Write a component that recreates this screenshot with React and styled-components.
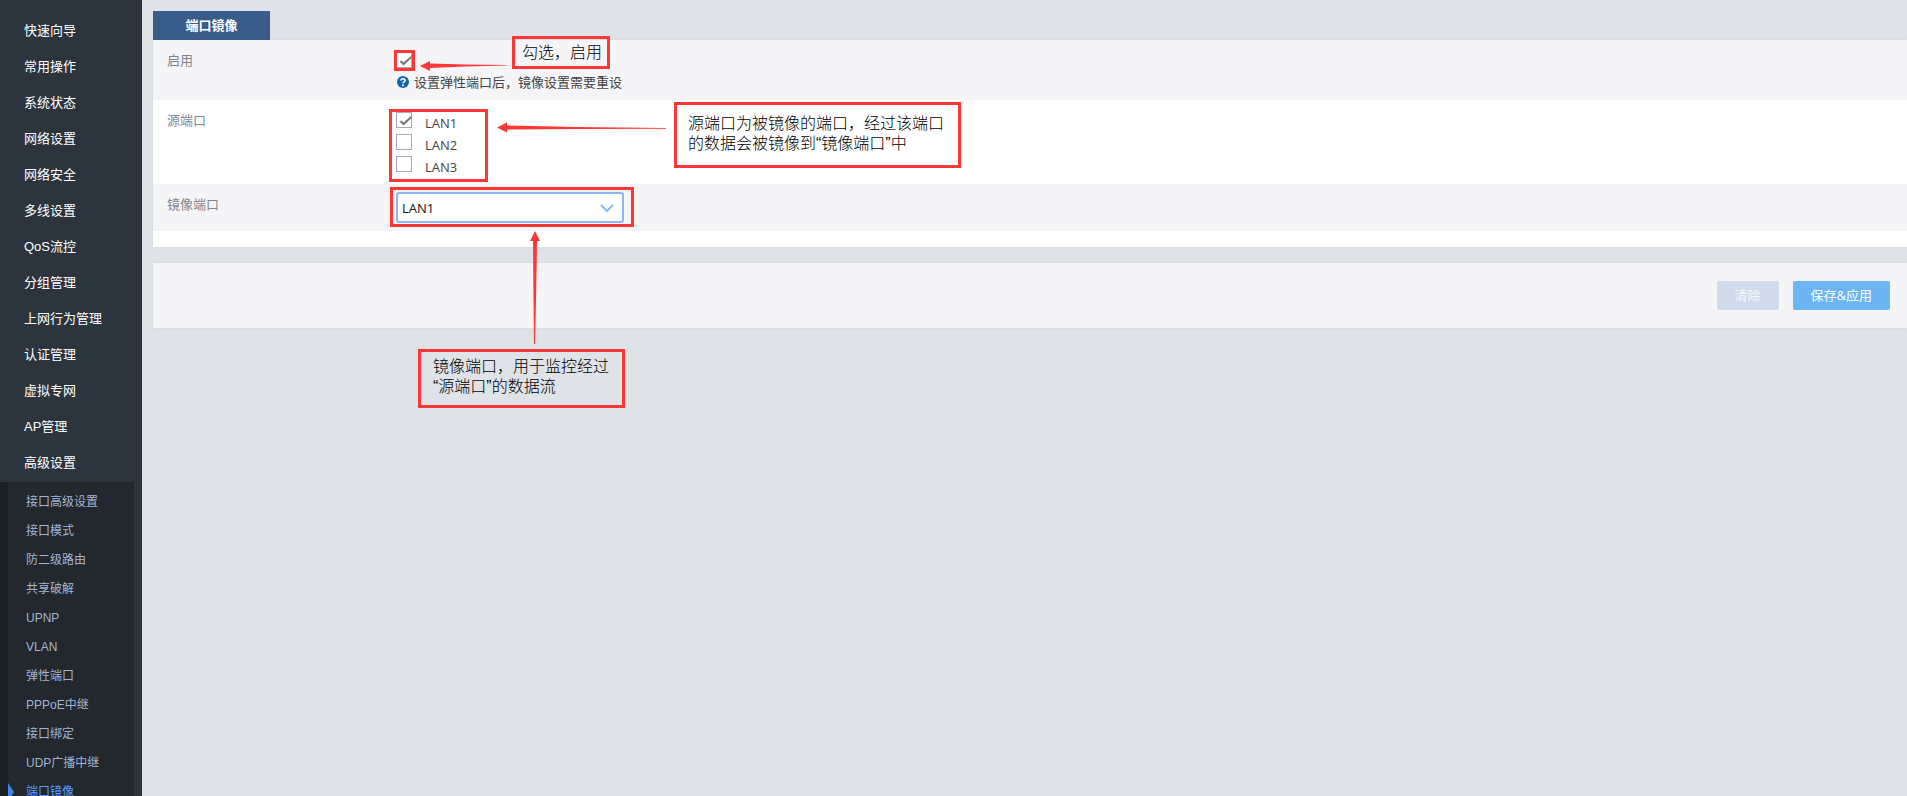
import React, { useState } from 'react';
import styled, { createGlobalStyle, ThemeProvider } from 'styled-components';

const theme = {
  colors: {
    page: '#dfe2e7',
    sidebar: '#2c343d',
    submenu: '#22282d',
    submenuEdge: '#1a1f22',
    submenuText: '#a3b4d2',
    active: '#5b9bff',
    tab: '#3a5c8a',
    rowAlt: '#f5f5f8',
    label: '#82858e',
    text: '#444',
    primary: '#6ab5f2',
    disabled: '#d0dcec',
    note: '#fd3636',
  },
  fonts: {
    menu: '"Liberation Sans", "Noto Sans CJK SC", sans-serif',
    body: '"Open Sans", "Noto Sans CJK SC", sans-serif',
  },
};

const GlobalStyle = createGlobalStyle`
  * {
    box-sizing: border-box;
  }
  body {
    margin: 0;
    font-family: ${({ theme }) => theme.fonts.body};
    font-size: 13px;
    background: ${({ theme }) => theme.colors.page};
  }
`;

const Layout = styled.div`
  display: flex;
  height: 100vh;
  overflow: hidden;
`;

// Menu lateral
const Sidebar = styled.nav`
  flex: 0 0 142px;
  padding-top: 13px;
  overflow: hidden;
  background: ${({ theme }) => theme.colors.sidebar};
  font-family: ${({ theme }) => theme.fonts.menu};
`;

const MenuLink = styled.a`
  display: block;
  padding-left: 24px;
  color: #fff;
  line-height: 36px;
  text-decoration: none;
  white-space: nowrap;
`;

const Submenu = styled.div`
  margin: 1px 8px 0 0;
  padding: 5px 0;
  border-left: 8px solid ${({ theme }) => theme.colors.submenuEdge};
  background: ${({ theme }) => theme.colors.submenu};
`;

const SubmenuLink = styled.a`
  display: flex;
  align-items: center;
  height: 29px;
  padding-left: 18px;
  color: ${({ theme, $active }) => ($active ? theme.colors.active : theme.colors.submenuText)};
  font-size: 12px;
  line-height: 16px;
  text-decoration: none;
  white-space: nowrap;
  ${({ $active }) => $active && `
    padding-left: 0;
    &::before {
      content: '';
      margin-right: 12px;
      border: solid transparent;
      border-width: 9px 0 9px 6px;
      border-left-color: #4285e8;
    }
  `}
`;

const Main = styled.main`
  position: relative;
  flex: 1;
  min-width: 0;
  padding: 11px 0 0 11px;
`;

const Tab = styled.button`
  display: block;
  width: 117px;
  height: 29px;
  padding: 0 0 2px;
  border: 0;
  background: ${({ theme }) => theme.colors.tab};
  color: #fff;
  font: bold 13px ${({ theme }) => theme.fonts.body};
`;

const Panel = styled.section`
  margin-bottom: 16px;
  padding-bottom: 16px;
  background: #fff;
  box-shadow: 0 0 3px rgba(0, 0, 0, .06);
`;

const RowLabel = styled.label`
  color: ${({ theme }) => theme.colors.label};
  line-height: 16px;
`;

const Row = styled.div`
  display: grid;
  grid-template-columns: 229px 1fr;
  padding: ${({ $compact }) => ($compact ? '8px 14px' : '12px 14px 6px')};
  background: ${({ theme, $alt }) => ($alt ? theme.colors.rowAlt : '#fff')};
  ${RowLabel} {
    padding-top: ${({ $compact }) => ($compact ? '4px' : '0')};
  }
`;

const Field = styled.div`
  color: ${({ theme }) => theme.colors.text};
`;

const Marked = styled.div`
  position: relative;
  width: ${({ $width }) => $width}px;
`;

// Moldura vermelha em volta do campo
const Frame = styled.span`
  position: absolute;
  inset: ${({ $inset }) => $inset};
  border: 3px solid ${({ theme }) => theme.colors.note};
  pointer-events: none;
`;

const CheckBox = styled.span`
  position: relative;
  display: block;
  width: 16px;
  height: 16px;
  svg {
    position: absolute;
    inset: 0;
    pointer-events: none;
  }
`;

const CheckInput = styled.input`
  display: block;
  appearance: none;
  width: 16px;
  height: 16px;
  margin: 0;
  border: 1px solid #a5abb4;
  background: #fff;
`;

const PortOption = styled.div`
  display: flex;
  gap: 13px;
  height: 22px;
  line-height: 22px;
`;

const Hint = styled.p`
  display: flex;
  align-items: center;
  gap: 5px;
  margin: 4px 0 2px;
  padding-left: 1px;
  line-height: 20px;
`;

const Select = styled.select`
  display: block;
  appearance: none;
  width: 100%;
  height: 31px;
  padding: 0 4px;
  border: 2px solid #8db5f6;
  border-radius: 3px;
  background: #fff;
  color: #111;
  font: 13px ${({ theme }) => theme.fonts.body};
  outline: 0;
`;

const Chevron = styled.svg`
  position: absolute;
  top: 12px;
  right: 10px;
  pointer-events: none;
`;

const ActionBar = styled.footer`
  display: flex;
  justify-content: flex-end;
  gap: 14px;
  padding: 18px 17px;
  background: ${({ theme }) => theme.colors.rowAlt};
  box-shadow: 0 0 3px rgba(0, 0, 0, .06);
`;

const Button = styled.button`
  height: 29px;
  padding: 0 18px 2px;
  border: 0;
  border-radius: 2px;
  background: ${({ theme }) => theme.colors.primary};
  color: #fff;
  font: 13px ${({ theme }) => theme.fonts.body};
  &:disabled {
    background: ${({ theme }) => theme.colors.disabled};
    color: #f4f7fb;
  }
`;

// Notas sobre a tela
const Callout = styled.div`
  position: absolute;
  top: ${({ $top }) => $top}px;
  left: ${({ $left }) => $left}px;
  padding: ${({ $pad }) => $pad};
  border: 3px solid ${({ theme }) => theme.colors.note};
  color: #000;
  font: 300 16px/20px ${({ theme }) => theme.fonts.menu};
  white-space: nowrap;
`;

const Arrow = styled.svg`
  position: absolute;
  top: ${({ $top }) => $top}px;
  left: ${({ $left }) => $left}px;
  fill: ${({ theme }) => theme.colors.note};
  pointer-events: none;
`;

const menu = [
  '快速向导', '常用操作', '系统状态', '网络设置', '网络安全', '多线设置', 'QoS流控',
  '分组管理', '上网行为管理', '认证管理', '虚拟专网', 'AP管理', '高级设置',
];

const submenu = [
  '接口高级设置', '接口模式', '防二级路由', '共享破解', 'UPNP', 'VLAN',
  '弹性端口', 'PPPoE中继', '接口绑定', 'UDP广播中继', '端口镜像',
];

const ports = ['LAN1', 'LAN2', 'LAN3'];

function Check({ checked, ...props }) {
  return (
    <CheckBox>
      <CheckInput type="checkbox" checked={checked} {...props} />
      {checked && (
        <svg width="16" height="16" viewBox="0 0 16 16">
          <path d="M3.5 9.5 L5.5 8.5 L7.5 10.5 L15.5 3.5 V6 L7.5 13.5 Z" fill="#777" />
        </svg>
      )}
    </CheckBox>
  );
}

function HelpIcon() {
  return (
    <svg width="12" height="12" viewBox="0 0 12 12">
      <circle cx="6" cy="6" r="6" fill="#1763ae" />
      <path d="M4 4.6 C4 2.2 8 2.2 8 4.4 C8 5.8 6 5.8 6 7.3" fill="none" stroke="#fff" strokeWidth="1.6" />
      <circle cx="6" cy="9.2" r="1" fill="#fff" />
    </svg>
  );
}

export default function App() {
  const [enabled, setEnabled] = useState(true);
  const [sources, setSources] = useState(['LAN1']);
  const [mirror, setMirror] = useState('LAN1');

  const toggle = (port) => {
    setSources(sources.includes(port) ? sources.filter((p) => p !== port) : [...sources, port]);
  };

  return (
    <ThemeProvider theme={theme}>
      <GlobalStyle />
      <Layout>
        <Sidebar>
          {menu.map((item) => (
            <MenuLink key={item} href="#">{item}</MenuLink>
          ))}
          <Submenu>
            {submenu.map((item) => (
              <SubmenuLink key={item} href="#" $active={item === '端口镜像'}>{item}</SubmenuLink>
            ))}
          </Submenu>
        </Sidebar>

        <Main>
          <Tab type="button">端口镜像</Tab>
          <Panel>
            <Row $alt>
              <RowLabel htmlFor="enable">启用</RowLabel>
              <Field>
                <Marked $width={16}>
                  <Check id="enable" checked={enabled} onChange={() => setEnabled(!enabled)} />
                  <Frame $inset="-2px -3px -3px -2px" />
                </Marked>
                <Hint><HelpIcon />设置弹性端口后，镜像设置需要重设</Hint>
              </Field>
            </Row>
            <Row>
              <RowLabel as="span">源端口</RowLabel>
              <Field>
                <Marked $width={85}>
                  {ports.map((port) => (
                    <PortOption key={port}>
                      <Check id={port} checked={sources.includes(port)} onChange={() => toggle(port)} />
                      <label htmlFor={port}>{port}</label>
                    </PortOption>
                  ))}
                  <Frame $inset="-3px -7px -4px -7px" />
                </Marked>
              </Field>
            </Row>
            <Row $alt $compact>
              <RowLabel htmlFor="mirror">镜像端口</RowLabel>
              <Field>
                <Marked $width={228}>
                  <Select id="mirror" value={mirror} onChange={(e) => setMirror(e.target.value)}>
                    {ports.map((port) => <option key={port}>{port}</option>)}
                  </Select>
                  <Chevron width="14" height="9" viewBox="0 0 14 9">
                    <path d="M1 1 L7 7 L13 1" fill="none" stroke="#7fc0f8" strokeWidth="2" />
                  </Chevron>
                  <Frame $inset="-5px -10px -4px -6px" />
                </Marked>
              </Field>
            </Row>
          </Panel>
          <ActionBar>
            <Button type="button" disabled>清除</Button>
            <Button type="button">保存&amp;应用</Button>
          </ActionBar>

          <Callout $top={36} $left={370} $pad="4px 5px 3px 7px">勾选，启用</Callout>
          <Callout $top={102} $left={532} $pad="9px 14px 11px 11px">
            源端口为被镜像的端口，经过该端口<br />的数据会被镜像到“镜像端口”中
          </Callout>
          <Callout $top={349} $left={276} $pad="5px 13px 8px 12px">
            镜像端口，用于监控经过<br />“源端口”的数据流
          </Callout>
          <Arrow $top={60} $left={278} width="88" height="12" viewBox="0 0 88 12">
            <path d="M0 6 L10 1 V3.5 L45 4.5 L87 5 V5.6 L45 6.5 L10 8 V11 Z" />
          </Arrow>
          <Arrow $top={122} $left={355} width="170" height="12" viewBox="0 0 170 12">
            <path d="M0 5.5 L10 0.5 V3.5 L80 5 L169 6 V6.8 L80 7 L10 7.5 V10.5 Z" />
          </Arrow>
          <Arrow $top={231} $left={387} width="12" height="114" viewBox="0 0 12 114">
            <path d="M6 0 L11 10 H8 L7.2 60 L6 113 H5 L4.4 60 L4 10 H1 Z" />
          </Arrow>
        </Main>
      </Layout>
    </ThemeProvider>
  );
}
